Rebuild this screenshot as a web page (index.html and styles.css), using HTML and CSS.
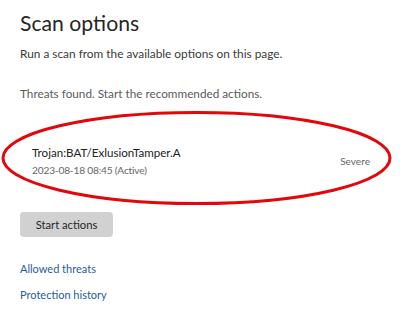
FILE: index.html
```html
<!DOCTYPE html>
<html>
<head>
<meta charset="utf-8">
<link rel="stylesheet" href="styles.css">
</head>
<body>
<main class="page">
  <h1 class="title">Scan options</h1>
  <p class="intro">Run a scan from the available options on this page.</p>
  <p class="status">Threats found. Start the recommended actions.</p>
  <div class="threat">
    <div class="threat-info">
      <div class="threat-name">Trojan:BAT/ExlusionTamper.A</div>
      <div class="threat-date">2023-08-18 08:45 (Active)</div>
    </div>
    <div class="threat-level">Severe</div>
  </div>
  <button class="action-btn">Start actions</button>
  <nav class="links">
    <a class="link" href="#">Allowed threats</a>
    <a class="link" href="#">Protection history</a>
  </nav>
  <svg class="mark" width="400" height="320" viewBox="0 0 400 320">
    <ellipse cx="196.5" cy="158" rx="193.5" ry="45.5" fill="none" stroke="#e3060b" stroke-width="3"/>
  </svg>
</main>
</body>
</html>
```
FILE: styles.css
```css
html, body {
  margin: 0;
  padding: 0;
  background: #ffffff;
}
.page {
  position: relative;
  width: 400px;
  height: 320px;
  padding-left: 20px;
  box-sizing: border-box;
  font-family: Lato, "Open Sans", sans-serif;
  overflow: hidden;
}
.title {
  margin: 0;
  padding-top: 7px;
  font-size: 21.2px;
  line-height: 32px;
  font-weight: 400;
  color: #262626;
}
.intro {
  margin: 5px 0 0;
  font-size: 11.85px;
  line-height: 20px;
  color: #3a3a3a;
}
.status {
  margin: 20px 0 0;
  font-size: 11.75px;
  line-height: 20px;
  color: #5a5a5a;
}
.threat {
  margin-top: 40px;
  width: 362px;
  padding: 0 12px;
  box-sizing: border-box;
  display: flex;
  align-items: center;
  justify-content: space-between;
}
.threat-name {
  font-size: 11.6px;
  line-height: 18px;
  color: #222222;
}
.threat-date {
  font-size: 10.2px;
  line-height: 16px;
  letter-spacing: -0.2px;
  color: #666666;
}
.threat-level {
  font-size: 10.1px;
  line-height: 16px;
  color: #666666;
}
.action-btn {
  display: block;
  margin-top: 34px;
  width: 93px;
  height: 25px;
  padding: 0;
  border: none;
  border-radius: 4px;
  background: #d1d1d1;
  font-family: inherit;
  font-size: 11.2px;
  line-height: 25px;
  color: #262626;
}
.links {
  margin-top: 22px;
  display: flex;
  flex-direction: column;
  align-items: flex-start;
  gap: 6px;
}
.link {
  font-size: 11px;
  line-height: 20px;
  color: #1f5c9e;
  text-decoration: none;
}
.mark {
  position: absolute;
  left: 0;
  top: 0;
  pointer-events: none;
}
```
